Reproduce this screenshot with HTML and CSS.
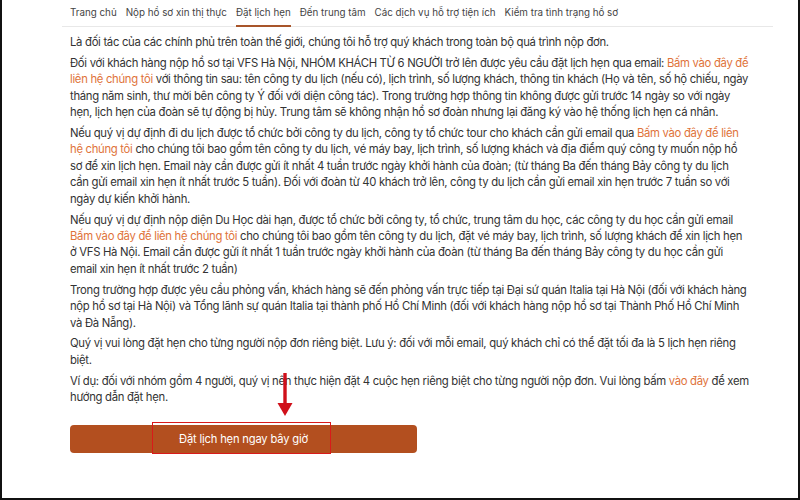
FILE: index.html
```html
<!DOCTYPE html>
<html lang="vi">
<head>
    <meta charset="UTF-8">
    <meta name="viewport" content="width=device-width, initial-scale=1.0">
    <title>Đặt lịch hẹn</title>
    <link rel="stylesheet" href="styles.css">
</head>
<body>
    <div class="frame">
        <nav class="tabs">
            <a class="tab">Trang chủ</a>
            <a class="tab">Nộp hồ sơ xin thị thực</a>
            <a class="tab active">Đặt lịch hẹn</a>
            <a class="tab">Đến trung tâm</a>
            <a class="tab">Các dịch vụ hỗ trợ tiện ích</a>
            <a class="tab">Kiểm tra tình trạng hồ sơ</a>
        </nav>

        <div class="content">
            <p>Là đối tác của các chính phủ trên toàn thế giới, chúng tôi hỗ trợ quý khách trong toàn bộ quá trình nộp đơn.</p>
            <p>Đối với khách hàng nộp hồ sơ tại VFS Hà Nội, NHÓM KHÁCH TỪ 6 NGƯỜI trở lên được yêu cầu đặt lịch hẹn qua email: <a class="link">Bấm vào đây để liên hệ chúng tôi</a> với thông tin sau: tên công ty du lịch (nếu có), lịch trình, số lượng khách, thông tin khách (Họ và tên, số hộ chiếu, ngày tháng năm sinh, thư mời bên công ty Ý đối với diện công tác). Trong trường hợp thông tin không được gửi trước 14 ngày so với ngày hẹn, lịch hẹn của đoàn sẽ tự động bị hủy. Trung tâm sẽ không nhận hồ sơ đoàn nhưng lại đăng ký vào hệ thống lịch hẹn cá nhân.</p>
            <p>Nếu quý vị dự định đi du lịch được tổ chức bởi công ty du lịch, công ty tổ chức tour cho khách cần gửi email qua <a class="link">Bấm vào đây để liên hệ chúng tôi</a> cho chúng tôi bao gồm tên công ty du lịch, vé máy bay, lịch trình, số lượng khách và địa điểm quý công ty muốn nộp hồ sơ để xin lịch hẹn. Email này cần được gửi ít nhất 4 tuần trước ngày khởi hành của đoàn; (từ tháng Ba đến tháng Bảy công ty du lịch cần gửi email xin hẹn ít nhất trước 5 tuần). Đối với đoàn từ 40 khách trở lên, công ty du lịch cần gửi email xin hẹn trước 7 tuần so với ngày dự kiến khởi hành.</p>
            <p>Nếu quý vị dự định nộp diện Du Học dài hạn, được tổ chức bởi công ty, tổ chức, trung tâm du học, các công ty du học cần gửi email <a class="link">Bấm vào đây để liên hệ chúng tôi</a> cho chúng tôi bao gồm tên công ty du lịch, đặt vé máy bay, lịch trình, số lượng khách để xin lịch hẹn ở VFS Hà Nội. Email cần được gửi ít nhất 1 tuần trước ngày khởi hành của đoàn (từ tháng Ba đến tháng Bảy công ty du học cần gửi email xin hẹn ít nhất trước 2 tuần)</p>
            <p>Trong trường hợp được yêu cầu phỏng vấn, khách hàng sẽ đến phỏng vấn trực tiếp tại Đại sứ quán Italia tại Hà Nội (đối với khách hàng nộp hồ sơ tại Hà Nội) và Tổng lãnh sự quán Italia tại thành phố Hồ Chí Minh (đối với khách hàng nộp hồ sơ tại Thành Phố Hồ Chí Minh và Đà Nẵng).</p>
            <p>Quý vị vui lòng đặt hẹn cho từng người nộp đơn riêng biệt. Lưu ý: đối với mỗi email, quý khách chỉ có thể đặt tối đa là 5 lịch hẹn riêng biệt.</p>
            <p>Ví dụ: đối với nhóm gồm 4 người, quý vị nên thực hiện đặt 4 cuộc hẹn riêng biệt cho từng người nộp đơn. Vui lòng bấm <a class="link">vào đây</a> để xem hướng dẫn đặt hẹn.</p>

            <div class="cta">
                <button class="book-btn">Đặt lịch hẹn ngay bây giờ</button>
                <div class="highlight"></div>
                <svg class="arrow" width="16" height="44" viewBox="0 0 16 44">
                    <rect x="6.3" y="0" width="3.4" height="32" fill="#d0101a"/>
                    <path d="M0.5 30 L15.5 30 L8 43 Z" fill="#d0101a"/>
                </svg>
            </div>
        </div>
    </div>
</body>
</html>
```

FILE: styles.css
```css
body {
    margin: 0;
    padding: 0;
    background: #fff;
    font-family: Inter, 'Noto Sans', sans-serif;
    color: #333;
}

.frame {
    width: 796px;
    height: 498px;
    border-left: 2px solid #111;
    border-right: 2px solid #111;
    border-bottom: 2px solid #111;
    overflow: hidden;
}

.tabs {
    display: flex;
    gap: 9px;
    margin-left: 60px;
    width: 703px;
    padding-left: 8px;
    border-bottom: 1px solid #e8e8e8;
    font-size: 9.8px;
    color: #444;
}

.tab {
    padding: 7px 0 7px;
    border-bottom: 2px solid transparent;
    margin-bottom: -1px;
}

.tab.active {
    border-bottom-color: #a8552a;
}

.content {
    width: 680px;
    margin-left: 68px;
    padding-top: 7px;
    font-size: 11.3px;
    letter-spacing: -0.3px;
    line-height: 16.4px;
}

.content p {
    margin: 0 0 4.5px;
}

.link {
    color: #e0733a;
}

.cta {
    position: relative;
    margin-top: 19px;
    width: 347px;
}

.book-btn {
    display: block;
    width: 347px;
    height: 28px;
    background: #b34f1f;
    color: #fff;
    border: none;
    border-radius: 4px;
    font-family: Inter, 'Noto Sans', sans-serif;
    font-size: 11.2px;
    letter-spacing: -0.18px;
}

.highlight {
    position: absolute;
    left: 82px;
    top: -3px;
    width: 177px;
    height: 30px;
    border: 1.5px solid #d91a1a;
}

.arrow {
    position: absolute;
    left: 207px;
    top: -52px;
}
```
